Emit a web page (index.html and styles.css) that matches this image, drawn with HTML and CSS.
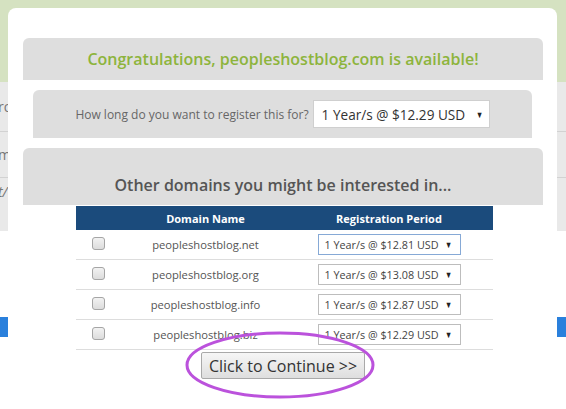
FILE: index.html
```html
<!DOCTYPE html>
<html>
<head>
<meta charset="utf-8">
<link rel="stylesheet" href="styles.css">
</head>
<body>
<div class="site">
  <div class="topband"></div>
  <div class="rows">
    <div class="row r1"><span>ro</span></div>
    <div class="row r2"><span>m</span></div>
    <div class="row r3"><span class="it">t/</span></div>
  </div>
  <div class="spacer"></div>
  <div class="bluebar"></div>
</div>

<div class="modal">
  <div class="panel congrats">Congratulations, peopleshostblog.com is available!</div>
  <div class="panel period">
    <span class="label">How long do you want to register this for?</span>
    <div class="select big"><span>1 Year/s @ $12.29 USD</span><span class="arrow">&#9660;</span></div>
  </div>
  <div class="panel other">Other domains you might be interested in...</div>
  <table class="domains">
    <thead>
      <tr><th class="c1"></th><th class="c2">Domain Name</th><th class="c3">Registration Period</th></tr>
    </thead>
    <tbody>
      <tr><td><span class="check"></span></td><td>peopleshostblog.net</td><td><div class="select small focus"><span>1 Year/s @ $12.81 USD</span><span class="arrow">&#9660;</span></div></td></tr>
      <tr><td><span class="check"></span></td><td>peopleshostblog.org</td><td><div class="select small"><span>1 Year/s @ $13.08 USD</span><span class="arrow">&#9660;</span></div></td></tr>
      <tr><td><span class="check"></span></td><td>peopleshostblog.info</td><td><div class="select small"><span>1 Year/s @ $12.87 USD</span><span class="arrow">&#9660;</span></div></td></tr>
      <tr><td><span class="check"></span></td><td>peopleshostblog.biz</td><td><div class="select small"><span>1 Year/s @ $12.29 USD</span><span class="arrow">&#9660;</span></div></td></tr>
    </tbody>
  </table>
  <button class="continue">Click to Continue &gt;&gt;</button>
</div>

<svg class="circle" width="192" height="70" viewBox="0 0 192 70">
  <ellipse cx="96" cy="34" rx="93" ry="32" fill="none" stroke="#bb52dc" stroke-width="3"/>
</svg>
</body>
</html>
```
FILE: styles.css
```css
html, body {
  margin: 0;
  padding: 0;
  overflow: hidden;
  background: #ffffff;
  font-family: "Open Sans", "Liberation Sans", sans-serif;
}

.site {
  width: 566px;
}

.topband {
  height: 82px;
  background: #d5e2c1;
}

.rows {
  background: #e9e9e9;
}

.row {
  display: flex;
  align-items: center;
  border-bottom: 1px solid #d2d2d2;
  font-size: 14px;
  color: #777;
}

.row span {
  margin-left: -2px;
}

.r1 { height: 49px; }
.r2 { height: 45px; }
.r3 { height: 53px; border-bottom: none; align-items: flex-start; }
.r3 span { margin-top: 4px; }

.it {
  font-style: italic;
}

.spacer {
  height: 86px;
}

.bluebar {
  height: 20px;
  background: #2a80dc;
}

.modal {
  position: absolute;
  left: 8px;
  top: 8px;
  width: 549px;
  height: 440px;
  box-sizing: border-box;
  background: #ffffff;
  border-radius: 8px;
  padding: 30px 14px 0 15px;
}

.panel {
  background: #dedede;
  border-radius: 6px 6px 0 0;
}

.congrats {
  height: 42px;
  display: flex;
  align-items: center;
  justify-content: center;
  color: #8db43c;
  font-size: 16px;
  font-weight: 600;
}

.period {
  margin: 10px 11px 0 10px;
  height: 48px;
  display: flex;
  align-items: center;
  justify-content: center;
  gap: 4px;
}

.label {
  font-size: 12px;
  color: #666;
}

.select {
  display: flex;
  align-items: center;
  justify-content: space-between;
  box-sizing: border-box;
  background: #ffffff;
  color: #333;
  white-space: nowrap;
}

.select .arrow {
  font-size: 9px;
  color: #222;
  transform: scaleX(0.8);
}

.big {
  width: 177px;
  height: 28px;
  border: 1px solid #cfcfcf;
  padding: 0 5px 0 8px;
  font-size: 13.6px;
}

.small {
  width: 143px;
  height: 21px;
  border: 1px solid #bdbdbd;
  padding: 0 7px 0 6px;
  font-size: 10.8px;
  margin: 0 auto;
  text-align: left;
  color: #444;
}

.small.focus {
  border-color: #86a9d6;
}

.other {
  margin-top: 10px;
  height: 57px;
  box-sizing: border-box;
  padding-top: 26px;
  line-height: 22px;
  text-align: center;
  color: #555;
  font-size: 16px;
  font-weight: 600;
}

.domains {
  width: 417px;
  margin: 1px auto 0;
  border-collapse: collapse;
  position: relative;
  left: 1px;
}

.domains th {
  background: #1b4b7c;
  color: #ffffff;
  font-size: 11px;
  font-weight: 700;
  height: 24px;
  padding: 0;
}

.c1 { width: 50px; }
.c2 { width: 160px; }
.c3 { width: 207px; }

.domains td {
  height: 29px;
  padding: 0;
  border-bottom: 1px solid #dddddd;
  text-align: center;
  font-size: 11.2px;
  color: #555;
}

.check {
  display: inline-block;
  width: 11px;
  height: 11px;
  border: 1px solid #a5a5a5;
  border-radius: 3px;
  background: linear-gradient(#f2f2f2, #dcdcdc);
  vertical-align: middle;
  margin-top: -5px;
  margin-left: -4px;
}

.continue {
  display: block;
  margin: 2px auto 0;
  width: 164px;
  height: 27px;
  padding: 0;
  border: 1px solid #a9a9a9;
  border-radius: 2px;
  background: linear-gradient(#f6f6f6, #dedede);
  font-family: "Open Sans", "Liberation Sans", sans-serif;
  font-size: 16px;
  color: #333;
}

.circle {
  position: absolute;
  left: 184px;
  top: 331px;
}
```
